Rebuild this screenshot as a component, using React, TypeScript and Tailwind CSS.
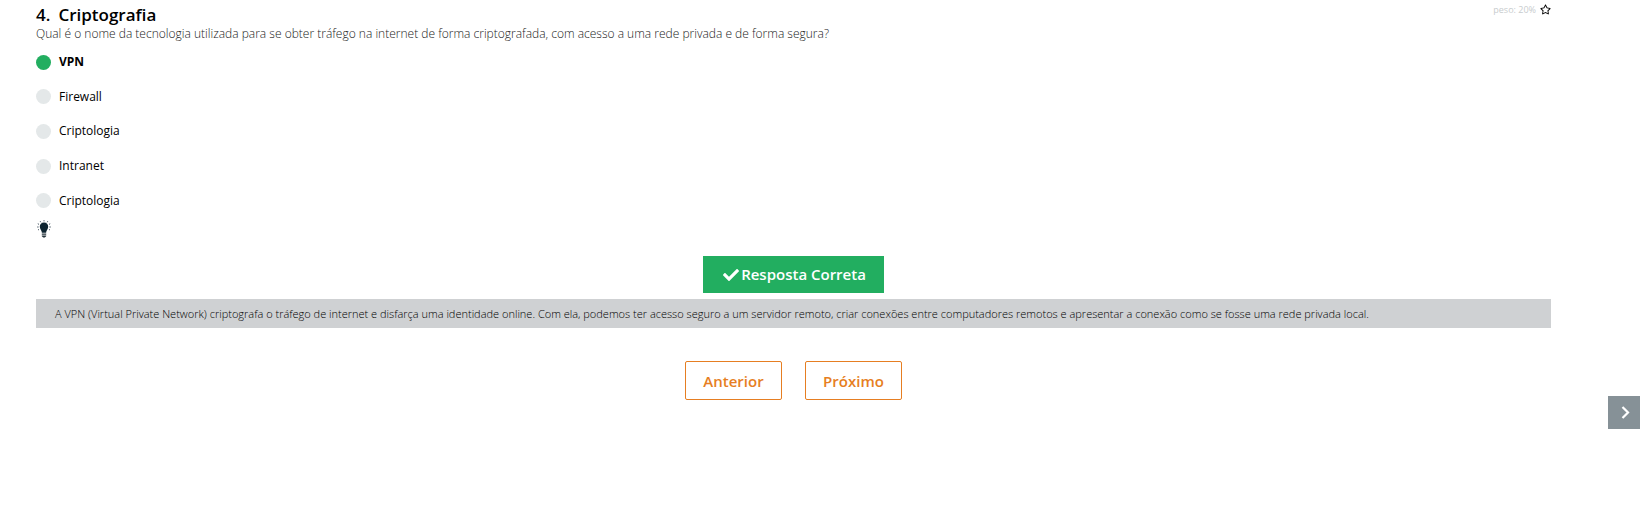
import { useState } from "react";
import { FaCheck, FaRegStar } from "react-icons/fa";

const options = ["VPN", "Firewall", "Criptologia", "Intranet", "Criptologia"];

function Bulb() {
  return (
    <svg viewBox="0 0 14 18" className="h-[18px] w-[14px]" aria-hidden="true">
      <path
        d="M7 2.500C4.400 2.500 2.800 4.400 2.800 6.800c0 2.400 1.900 3.400 2.100 6h4.200c.2-2.600 2.100-3.600 2.100-6C11.200 4.400 9.600 2.500 7 2.500z"
        fill="#0d2430"
      />
      <path d="M4.800 13.400h4.400v1.300H4.800zM4.800 15.400h4.400v.8L7.800 17.600H6.200L4.800 16.200z" fill="#26343c" />
      <path
        d="M7 .2v1.200M3.200 1.200l.7 1.100M10.800 1.200l-.7 1.100M.8 3.700l1.200.7M13.200 3.700l-1.200.7M.2 7h1.400M13.800 7h-1.400M1 10l1-.6M13 10l-1-.6"
        stroke="#4a5964"
        strokeWidth="1"
      />
    </svg>
  );
}

export default function App() {
  const [selected, setSelected] = useState(0);

  return (
    <div className="bg-white font-['Open_Sans',sans-serif] text-black">
      <main className="mr-[89px] ml-9 pt-1">
        <header className="flex items-start justify-between">
          <h1 className="flex gap-2 text-[17px] leading-[22px] font-semibold">
            <span>4.</span>
            <span>Criptografia</span>
          </h1>
          <div className="flex items-center gap-1 text-[9px] leading-[11px] text-[#c8ccce]">
            <span>peso: 20%</span>
            <button type="button" aria-label="Favoritar" className="text-black">
              <FaRegStar className="size-[11px]" />
            </button>
          </div>
        </header>
        <p className="text-[12px] leading-4 font-light text-[#222222]">
          Qual é o nome da tecnologia utilizada para se obter tráfego na internet de forma
          criptografada, com acesso a uma rede privada e de forma segura?
        </p>

        <fieldset className="mt-[3px] grid h-[173px] grid-rows-5">
          {options.map((option, i) => (
            <label
              key={i}
              className="flex items-center gap-2 text-[12px] has-checked:font-bold"
            >
              <input
                type="radio"
                name="resposta"
                checked={selected === i}
                onChange={() => setSelected(i)}
                className="size-[15px] appearance-none rounded-full bg-[#e4e8e9] checked:bg-[#22ae60]"
              />
              <span>{option}</span>
            </label>
          ))}
        </fieldset>

        <button type="button" aria-label="Dica" className="mt-0.5 ml-px block">
          <Bulb />
        </button>

        <div className="mt-[18px] flex justify-center">
          <div className="flex h-[37px] items-center gap-0.5 bg-[#22ae60] pr-[18px] pl-5 text-[15px] font-semibold text-white">
            <FaCheck className="size-4" />
            <span>Resposta Correta</span>
          </div>
        </div>

        <p className="mt-1.5 bg-[#cfd1d3] px-[19px] py-1.5 text-[11px] leading-[17px] font-light">
          A VPN (Virtual Private Network) criptografa o tráfego de internet e disfarça uma
          identidade online. Com ela, podemos ter acesso seguro a um servidor remoto, criar
          conexões entre computadores remotos e apresentar a conexão como se fosse uma rede
          privada local.
        </p>

        <nav className="mt-[33px] flex justify-center gap-[23px]">
          {["Anterior", "Próximo"].map((name) => (
            <button
              key={name}
              type="button"
              className="h-[39px] min-w-[97px] rounded-xs border border-[#e67e22] px-4 pt-0.5 text-[15px] font-semibold text-[#e67e22]"
            >
              {name}
            </button>
          ))}
        </nav>
      </main>

      <button
        type="button"
        aria-label="Abrir painel"
        className="fixed top-[396px] right-0 flex h-[33px] w-8 items-center justify-center bg-[#869197] pl-0.5 text-white"
      >
        <svg viewBox="0 0 9 13" className="h-[13px] w-[9px]" aria-hidden="true">
          <path d="M1.500 1L7 6.500 1.500 12" fill="none" stroke="currentColor" strokeWidth="2.200" />
        </svg>
      </button>
    </div>
  );
}
